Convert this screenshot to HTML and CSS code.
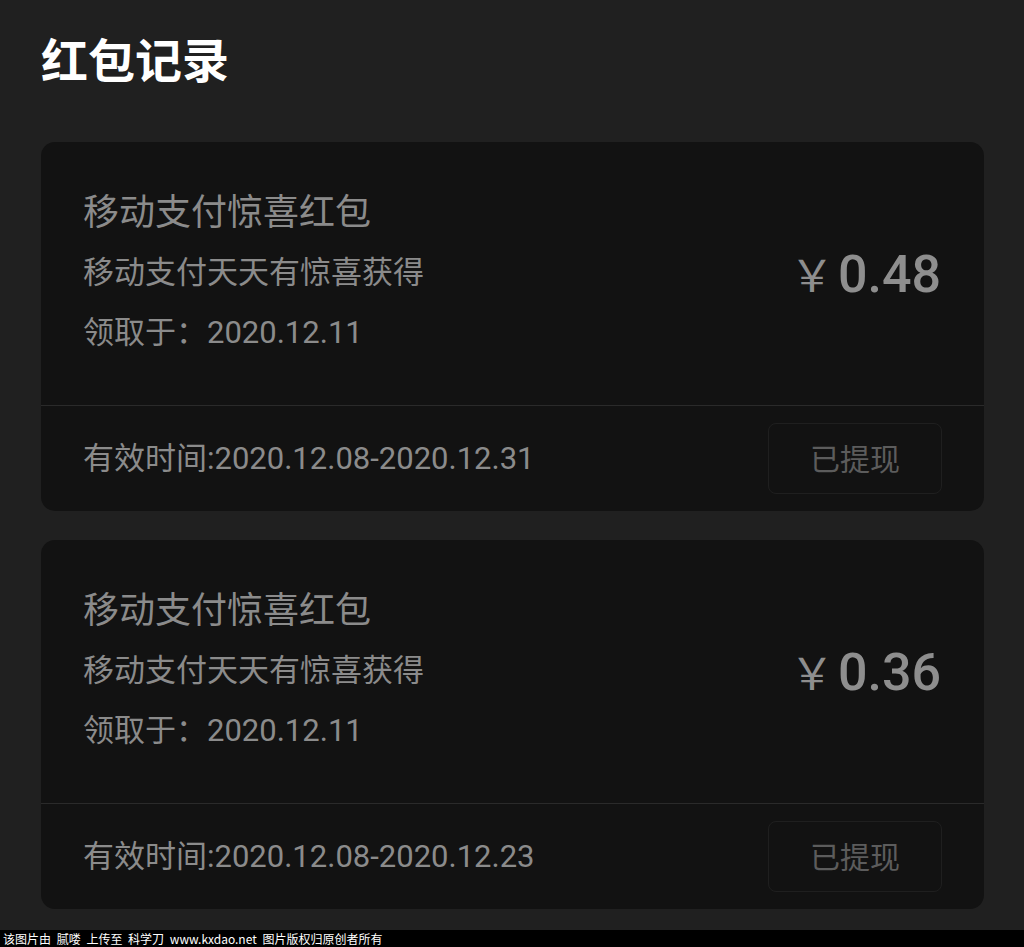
FILE: index.html
```html
<!DOCTYPE html>
<html lang="zh-CN">

<head>
    <meta charset="UTF-8">
    <meta name="viewport" content="width=device-width">
    <title>红包记录</title>
    <link rel="stylesheet" href="styles.css">
</head>

<body>
    <div class="page">
        <h1>红包记录</h1>

        <div class="card">
            <div class="card-top">
                <div class="info">
                    <p class="name">移动支付惊喜红包</p>
                    <p>移动支付天天有惊喜获得</p>
                    <p>领取于：2020.12.11</p>
                </div>
                <div class="amount"><span class="yen">￥</span>0.48</div>
            </div>
            <div class="card-bottom">
                <p>有效时间:2020.12.08-2020.12.31</p>
                <span class="btn">已提现</span>
            </div>
        </div>

        <div class="card">
            <div class="card-top">
                <div class="info">
                    <p class="name">移动支付惊喜红包</p>
                    <p>移动支付天天有惊喜获得</p>
                    <p>领取于：2020.12.11</p>
                </div>
                <div class="amount"><span class="yen">￥</span>0.36</div>
            </div>
            <div class="card-bottom">
                <p>有效时间:2020.12.08-2020.12.23</p>
                <span class="btn">已提现</span>
            </div>
        </div>
    </div>

    <div class="watermark">该图片由 腻喽 上传至 科学刀 www.kxdao.net 图片版权归原创者所有</div>
</body>

</html>
```

FILE: styles.css
```css
body {
    font-family: Roboto, "Noto Sans CJK SC", sans-serif;
    background-color: #202020;
    color: #8b8b8b;
    margin: 0;
}

p {
    margin: 0;
}

.page {
    padding: 37px 40px 21px 41px;
}

h1 {
    margin: 0 0 55px 0;
    font-size: 47px;
    line-height: 50px;
    font-weight: 700;
    color: #ffffff;
}

.card {
    background-color: #121212;
    border-radius: 14px;
    margin-bottom: 29px;
}

.card:last-child {
    margin-bottom: 0;
}

.card-top {
    display: flex;
    justify-content: space-between;
    align-items: center;
    padding: 41px 43px 42px 42px;
    border-bottom: 1px solid #2a2a2a;
}

.info p {
    font-size: 31px;
    line-height: 60px;
}

.info p.name {
    font-size: 36px;
}

.amount {
    font-size: 52px;
    font-weight: 500;
    color: #8e8e8e;
}

.yen {
    font-family: "Noto Sans CJK SC", sans-serif;
    font-weight: 400;
    font-size: 44px;
    margin-right: 4px;
}

.card-bottom {
    display: flex;
    justify-content: space-between;
    align-items: center;
    height: 105px;
    padding: 0 42px 0 42px;
    font-size: 31px;
}

.card-bottom p {
    padding-bottom: 6px;
}

.btn {
    display: flex;
    justify-content: center;
    align-items: center;
    width: 174px;
    height: 71px;
    padding-bottom: 4px;
    box-sizing: border-box;
    border: 1px solid #1f1f1f;
    border-radius: 8px;
    color: #5c5c5c;
    font-size: 30px;
}

.watermark {
    background-color: #000000;
    color: #ffffff;
    font-family: "Noto Sans CJK SC", sans-serif;
    font-size: 12px;
    line-height: 18px;
    height: 18px;
    padding-left: 3px;
    word-spacing: 3px;
    white-space: nowrap;
}
```
